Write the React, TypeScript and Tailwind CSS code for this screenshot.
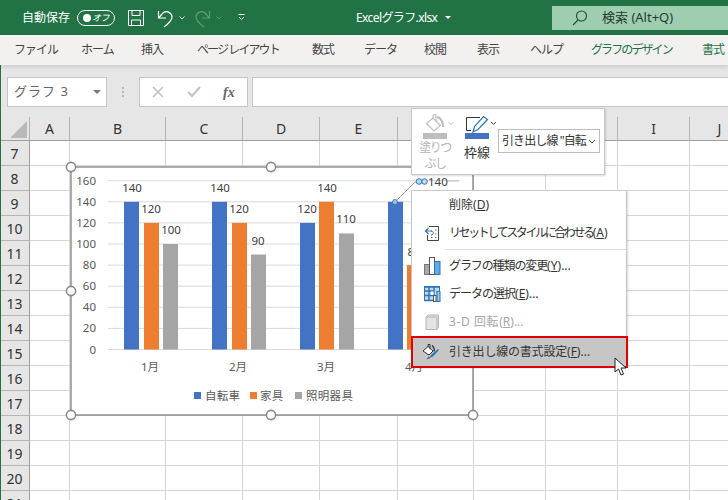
import React from "react";

const CJK = '"Noto Sans","Noto Sans CJK JP",sans-serif';

const tabs = [
  { label: "ファイル", w: "w-[38px]", ml: "ml-[14px]" },
  { label: "ホーム", w: "w-[32px]", ml: "ml-[29px]" },
  { label: "挿入", w: "w-[26px]", ml: "ml-[28px]" },
  { label: "ページ レイアウト", w: "w-[85px]", ml: "ml-[30px]" },
  { label: "数式", w: "w-[26px]", ml: "ml-[30px]" },
  { label: "データ", w: "w-[32px]", ml: "ml-[26px]" },
  { label: "校閲", w: "w-[26px]", ml: "ml-[28px]" },
  { label: "表示", w: "w-[26px]", ml: "ml-[27px]" },
  { label: "ヘルプ", w: "w-[32px]", ml: "ml-[27px]" },
  { label: "グラフのデザイン", w: "w-[81px]", ml: "ml-[29px]", green: true },
  { label: "書式", w: "w-[26px]", ml: "ml-[30px]", green: true },
];

// F, G and H sit behind the floating toolbar, so their letters never show
const columns = [
  { id: "a", name: "A", cls: "w-[40px]" },
  { id: "b", name: "B", cls: "w-[96px]" },
  { id: "c", name: "C", cls: "w-[77px]" },
  { id: "d", name: "D", cls: "w-[77px]" },
  { id: "e", name: "E", cls: "w-[78px]" },
  { id: "f", name: "", cls: "w-[76px]" },
  { id: "g", name: "", cls: "w-[72px]" },
  { id: "h", name: "", cls: "w-[72px]" },
  { id: "i", name: "I", cls: "w-[72px]" },
  { id: "j", name: "J", cls: "w-[60px]" },
];

const rows = [7, 8, 9, 10, 11, 12, 13, 14, 15, 16, 17, 18, 19, 20, 21];

function Sheet() {
  return (
    <div className="flex-1 overflow-hidden bg-white">
      <div className="flex h-[24px] bg-[#e6e6e6] border-b border-[#9f9f9f]">
        <div className="relative w-[30px] shrink-0 border-r border-[#b5b5b5]">
          <div className="absolute right-[2px] bottom-[2px] w-0 h-0 border-l-[17px] border-l-transparent border-b-[17px] border-b-[#b9b9b9]" />
        </div>
        {columns.map((c) => (
          <div
            key={c.id}
            className={`${c.cls} shrink-0 flex items-center justify-center border-r border-[#b5b5b5] text-[14px] text-[#333]`}
          >
            {c.name}
          </div>
        ))}
      </div>
      {rows.map((r) => (
        <div key={r} className="flex h-[25px]">
          <div className="w-[30px] shrink-0 flex items-center justify-center bg-[#e6e6e6] border-r border-b border-[#b5b5b5] border-r-[#9f9f9f] text-[14px] text-[#333]">
            {r}
          </div>
          {columns.map((c) => (
            <div key={c.id} className={`${c.cls} shrink-0 border-r border-b border-[#d6d6d6]`} />
          ))}
        </div>
      ))}
    </div>
  );
}

const bars = [
  { x: 124, w: 15, v: 140, c: "#4472c4", lx: 132, ly: 192 },
  { x: 144, w: 15, v: 120, c: "#ed7d31", lx: 151, ly: 213 },
  { x: 163, w: 15, v: 100, c: "#a5a5a5", lx: 171, ly: 234 },
  { x: 212, w: 15, v: 140, c: "#4472c4", lx: 220, ly: 192 },
  { x: 232, w: 15, v: 120, c: "#ed7d31", lx: 239, ly: 213 },
  { x: 251, w: 15, v: 90, c: "#a5a5a5", lx: 258, ly: 245 },
  { x: 300, w: 15, v: 120, c: "#4472c4", lx: 307, ly: 213 },
  { x: 319, w: 15, v: 140, c: "#ed7d31", lx: 327, ly: 192 },
  { x: 339, w: 15, v: 110, c: "#a5a5a5", lx: 346, ly: 223 },
  { x: 388, w: 15, v: 140, c: "#4472c4", lx: 0, ly: 0 },
  { x: 407, w: 15, v: 80, c: "#ed7d31", lx: 414, ly: 256 },
];

const axis = [160, 140, 120, 100, 80, 60, 40, 20, 0];
const axisY = (v: number) => 349.5 - (v / 20) * 21.1;

const handles = [
  [71, 167],
  [271, 167],
  [473, 167],
  [71, 291],
  [71, 415],
  [271, 415],
  [473, 415],
];

function Chart() {
  return (
    <svg
      className="absolute left-0 top-0 w-[728px] h-[500px]"
      viewBox="0 0 728 500"
      style={{ fontFamily: CJK }}
    >
      <rect x="71" y="167" width="402" height="248" fill="#fff" stroke="#8f8f8f" strokeWidth="1.5" />
      {axis.map((v) => (
        <g key={v}>
          <line x1="108" x2="460" y1={axisY(v)} y2={axisY(v)} stroke="#d9d9d9" strokeWidth="1" />
          <text x="96" y={axisY(v) + 4} textAnchor="end" fontSize="11.5" fill="#595959">
            {v}
          </text>
        </g>
      ))}
      {bars.map((b) => (
        <g key={b.x}>
          <rect x={b.x} y={axisY(b.v)} width={b.w} height={349.5 - axisY(b.v)} fill={b.c} />
          {b.lx > 0 && (
            <text x={b.lx} y={b.ly} textAnchor="middle" fontSize="11.5" fill="#404040">
              {b.v}
            </text>
          )}
        </g>
      ))}
      {["1月", "2月", "3月", "4月"].map((m, i) => (
        <text key={m} x={150 + i * 88} y={371} textAnchor="middle" fontSize="11.5" fill="#595959">
          {m}
        </text>
      ))}
      <rect x="194" y="392" width="7" height="7" fill="#4472c4" />
      <text x="205" y="400" fontSize="11.5" letterSpacing="0.3" fill="#595959">自転車</text>
      <rect x="250" y="392" width="7" height="7" fill="#ed7d31" />
      <text x="260" y="400" fontSize="11.5" letterSpacing="0.3" fill="#595959">家具</text>
      <rect x="295" y="392" width="7" height="7" fill="#a5a5a5" />
      <text x="306" y="400" fontSize="11.5" letterSpacing="0.3" fill="#595959">照明器具</text>

      <path d="M395 202 L415 182 L418 182" fill="none" stroke="#a6a6a6" strokeWidth="1" />
      <line x1="447" x2="459" y1="181" y2="181" stroke="#bfbfbf" />
      <circle cx="395" cy="202" r="2.5" fill="#9dc3e6" stroke="#2e75b6" strokeWidth="0.8" />
      <circle cx="419" cy="181.5" r="2.8" fill="#bcd7ef" stroke="#2e75b6" strokeWidth="1" />
      <circle cx="424.5" cy="181.5" r="2.8" fill="#bcd7ef" stroke="#2e75b6" strokeWidth="1" />
      <text x="428" y="185.5" fontSize="11.5" fill="#404040">140</text>

      {handles.map(([x, y]) => (
        <circle key={`${x}-${y}`} cx={x} cy={y} r="4.6" fill="#fff" stroke="#8a8a8a" strokeWidth="1.6" />
      ))}
    </svg>
  );
}

function MiniToolbar() {
  return (
    <div className="absolute left-[411px] top-[108px] w-[194px] h-[67px] bg-white border border-[#c8c8c8] shadow-[1px_1px_2px_rgba(0,0,0,0.15)] flex">
      <div className="relative w-[24px] ml-[11px] flex flex-col items-center pt-[24px]">
        <svg width="34" height="18" viewBox="0 0 34 18" fill="none" stroke="#bdbdbd" className="absolute left-[0px] top-[5px]">
          <path d="M3.5 9.5 L10 4 L17.5 11.5 L11 17 Z" fill="#fff" strokeWidth="1.1" />
          <path d="M10 5 V2 a1.5 1.5 0 0 1 3 0 V8" strokeWidth="1.1" />
          <path d="M14 3 C18 4 20 7 20 13" strokeWidth="2" />
          <path d="M25.5 8 L28 10.5 L30.5 8" strokeWidth="1" />
        </svg>
        <div className="w-[24px] h-[6px] bg-[#bdbdbd] shrink-0" />
        <div className="mt-[1px] w-[40px] text-[12px] leading-[16px] text-[#b5b5b5] text-center tracking-[-1.6px] whitespace-nowrap">
          塗りつ<br />ぶし
        </div>
      </div>
      <div className="relative w-[24px] ml-[18px] flex flex-col items-center pt-[24px]">
        <svg width="32" height="19" viewBox="0 0 32 19" fill="none" className="absolute left-[0px] top-[5px]">
          <path d="M1.5 16.5 V3.5 H15" stroke="#333" strokeWidth="1" />
          <path d="M1.5 16.5 H6" stroke="#333" strokeWidth="1" />
          <path d="M8 18 L9.5 12.5 L18.5 2.5 L22.5 5.5 L13 15.5 Z" fill="#fff" stroke="#2e75b6" strokeWidth="1.2" />
          <path d="M26 8 L28.5 10.5 L31 8" stroke="#444" strokeWidth="1" />
        </svg>
        <div className="w-[24px] h-[6px] bg-[#4472c4] shrink-0" />
        <div className="mt-[5px] text-[13px] leading-[16px] text-[#333] whitespace-nowrap">枠線</div>
      </div>
      <div className="absolute left-[86px] top-[20px] w-[102px] h-[24px] border border-[#bdbdbd] bg-white flex items-center justify-between pl-[3px] pr-[3px] text-[12px] text-[#333] whitespace-nowrap">
        <span className="tracking-[-0.9px]">引き出し線 "自転</span>
        <svg width="8" height="5" viewBox="0 0 8 5" fill="none" stroke="#444" className="shrink-0">
          <path d="M1 1 l3 3 l3 -3" />
        </svg>
      </div>
    </div>
  );
}

function ResetIcon() {
  return (
    <svg width="16" height="18" viewBox="0 0 16 18" fill="none">
      <path d="M5 2.5 H14.5 V16.5 H3.5 V11" stroke="#444" />
      <path d="M8 7 H2 M4.5 4 L1.5 7 L4.5 10" stroke="#2e75b6" strokeWidth="1.2" />
      <path d="M7 7 C10 7 10 11 7 11" stroke="#2e75b6" />
      <path d="M11 6 h1.5 M11 10 h1.5 M7 13.5 h1.5 M11 13.5 h1.5" stroke="#777" />
    </svg>
  );
}

function ChartTypeIcon() {
  return (
    <svg width="17" height="18" viewBox="0 0 17 18" fill="none">
      <rect x="0.5" y="7.5" width="5" height="10" fill="#a6a6a6" stroke="#777" />
      <rect x="5.5" y="0.5" width="5" height="17" fill="#fff" stroke="#555" />
      <rect x="10.5" y="4.5" width="5.5" height="13" fill="#63a9e6" stroke="#2e75b6" />
    </svg>
  );
}

function DataIcon() {
  return (
    <svg width="17" height="16" viewBox="0 0 17 16" fill="none">
      <rect x="0.5" y="0.5" width="15" height="14" fill="#bcd7ef" stroke="#2e75b6" />
      <path d="M0.5 1 H15.5 M0.5 5 H10 M0.5 9.5 H10 M0.5 14.5 H9 M5 0.5 V14.5 M10 0.5 V9" stroke="#2e75b6" strokeWidth="1.4" />
      <rect x="7" y="5.5" width="2.5" height="3.5" fill="#fff" />
      <rect x="9.5" y="9.5" width="2.5" height="6" fill="#fff" stroke="#555" />
      <rect x="13" y="5.5" width="3" height="10" fill="#9dc3e6" stroke="#2e75b6" />
    </svg>
  );
}

function RotateIcon() {
  return (
    <svg width="15" height="17" viewBox="0 0 15 17" fill="none">
      <path d="M1 3 L3 1 H13.5 V13 L12 15.5 H1 Z" fill="#e3e3e3" stroke="#b5b5b5" />
      <path d="M1 3 H12 V15.5" stroke="#b5b5b5" />
    </svg>
  );
}

function FormatIcon() {
  return (
    <svg width="18" height="16" viewBox="0 0 18 16" fill="none">
      <path d="M1 7 L6 2.5 L11 7 L7 11 Z" fill="#fff" stroke="#333" />
      <path d="M6 3 V0.5 H8 V5" stroke="#333" />
      <path d="M10 1.5 C12 3 12.5 5 12 7.5" stroke="#333" strokeWidth="1.4" />
      <path d="M7 14 L9.5 10.5 L16 5 L17 6 L11 12.5 Z" fill="#2e75b6" />
      <path d="M4 15.5 L7 12.5 L8.5 14 Z" fill="#555" />
    </svg>
  );
}

function MenuItem({
  icon,
  label,
  u,
  suffix,
  track,
  disabled,
}: {
  icon?: React.ReactNode;
  label: string;
  u: string;
  suffix: string;
  track: string;
  disabled?: boolean;
}) {
  return (
    <div className={`h-[28px] flex items-center ${disabled ? "text-[#a6a6a6]" : "text-[#333]"}`}>
      <div className="w-[37px] shrink-0 flex justify-center pl-[3px]">{icon}</div>
      <div className="text-[12px] whitespace-nowrap">
        <span className={track}>{label}</span>(<span className="underline">{u}</span>){suffix}
      </div>
    </div>
  );
}

function ContextMenu() {
  return (
    <div className="absolute left-[411px] top-[190px] w-[216px] h-[177px] bg-white border border-[#c8c8c8] shadow-[1px_1px_2px_rgba(0,0,0,0.15)]">
      <MenuItem label="削除" u="D" suffix="" track="tracking-[0px]" />
      <MenuItem icon={<ResetIcon />} label="リセットしてスタイルに合わせる" u="A" suffix="" track="tracking-[-2.4px]" />
      <div className="h-[1px] ml-[33px] my-[2px] bg-[#dcdcdc]" />
      <MenuItem icon={<ChartTypeIcon />} label="グラフの種類の変更" u="Y" suffix="..." track="tracking-[-1.1px]" />
      <MenuItem icon={<DataIcon />} label="データの選択" u="E" suffix="..." track="tracking-[-1px]" />
      <MenuItem icon={<RotateIcon />} label="3-D 回転" u="R" suffix="..." track="tracking-[0.6px]" disabled />
      <div className="absolute -left-[1px] top-[145px] w-[217px] h-[32px] bg-[#c6c6c6] border-2 border-[#e00000] flex items-center text-[#333]">
        <div className="w-[36px] shrink-0 flex justify-center">
          <FormatIcon />
        </div>
        <div className="text-[12px] whitespace-nowrap">
          <span className="tracking-[-0.2px]">引き出し線の書式設定</span>(<span className="underline">F</span>)...
        </div>
      </div>
    </div>
  );
}

export default function App() {
  return (
    <div
      className="relative w-[728px] h-[500px] overflow-hidden flex flex-col bg-white"
      style={{ fontFamily: CJK }}
    >
      {/* title bar */}
      <div className="h-[35px] shrink-0 bg-[#217346] flex items-center text-white text-[12px]">
        <span className="ml-[22px] w-[48px] whitespace-nowrap">自動保存</span>
        <div className="ml-[7px] w-[38px] h-[16px] rounded-full border border-white flex items-center justify-between pl-[5px] pr-[5px]">
          <div className="w-[8px] h-[8px] rounded-full bg-white" />
          <span className="text-[9px] italic tracking-[-0.5px]">オフ</span>
        </div>
        <svg width="16" height="16" viewBox="0 0 16 16" fill="none" stroke="#fff" className="ml-[13px]">
          <path d="M0.5 0.5 H15.5 V15.5 H0.5 Z M4 0.5 V5.5 H12 V0.5 M3.5 15.5 V10 H12.5 V15.5" />
        </svg>
        <svg width="16" height="20" viewBox="0 0 16 20" fill="none" stroke="#fff" strokeWidth="1.2" className="ml-[13px]">
          <path d="M1.5 3 V10 H9 M1.5 10 L6 5 C10 2 15 5 15 9 C15 13 11 16 7 19" />
        </svg>
        <svg width="6" height="4" viewBox="0 0 6 4" fill="none" stroke="#fff" className="ml-[6px]">
          <path d="M0.5 0.5 L3 3 L5.5 0.5" />
        </svg>
        <svg width="16" height="20" viewBox="0 0 16 20" fill="none" stroke="#5f9c7b" strokeWidth="1.2" className="ml-[10px]">
          <path d="M14.5 3 V10 H7 M14.5 10 L10 5 C6 2 1 5 1 9 C1 13 5 16 9 19" />
        </svg>
        <svg width="6" height="4" viewBox="0 0 6 4" fill="none" stroke="#5f9c7b" className="ml-[5px]">
          <path d="M0.5 0.5 L3 3 L5.5 0.5" />
        </svg>
        <svg width="7" height="7" viewBox="0 0 7 7" fill="none" stroke="#fff" className="ml-[16px]">
          <path d="M0.5 0.5 H6.5 M1 3 L3.5 5.5 L6 3" />
        </svg>
        <span className="ml-[111px] w-[83px] whitespace-nowrap tracking-[-0.6px]">Excelグラフ.xlsx</span>
        <div className="ml-[6px] w-0 h-0 border-x-[3px] border-x-transparent border-t-[3px] border-t-white" />
        <div className="ml-[101px] flex-1 h-[24px] bg-[#9fcdb0] flex items-center text-[#1f3d2d]">
          <svg width="16" height="16" viewBox="0 0 16 16" fill="none" stroke="#1f4d33" strokeWidth="1.1" className="ml-[20px]">
            <circle cx="9.5" cy="6" r="5" />
            <path d="M6 10 L1 15" />
          </svg>
          <span className="ml-[14px] text-[13px] whitespace-nowrap">検索 (Alt+Q)</span>
        </div>
      </div>

      {/* ribbon tabs */}
      <div className="h-[30px] shrink-0 bg-[#f3f1f0] flex items-center text-[12px] text-[#444] whitespace-nowrap overflow-hidden shadow-[0_2px_4px_rgba(0,0,0,0.12)] z-10">
        {tabs.map((t) => (
          <span
            key={t.label}
            className={`${t.w} ${t.ml} shrink-0 ${t.green ? "text-[#217346]" : ""} ${t.label.length > 5 ? "tracking-[-1.9px]" : "tracking-[-1px]"}`}
          >
            {t.label}
          </span>
        ))}
      </div>

      {/* formula bar */}
      <div className="h-[52px] shrink-0 bg-[#e6e6e6] flex items-start pt-[12px]">
        <div className="ml-[7px] w-[100px] h-[30px] bg-white border border-[#c6c6c6] flex items-center justify-between pl-[6px] pr-[5px] text-[13px] text-[#666]">
          <span className="tracking-[1px]">グラフ 3</span>
          <div className="w-0 h-0 border-x-[4px] border-x-transparent border-t-[4px] border-t-[#777]" />
        </div>
        <div className="ml-[15px] mt-[10px] flex flex-col gap-[2px]">
          <div className="w-[2px] h-[2px] bg-[#b5b5b5]" />
          <div className="w-[2px] h-[2px] bg-[#b5b5b5]" />
          <div className="w-[2px] h-[2px] bg-[#b5b5b5]" />
        </div>
        <div className="ml-[15px] w-[109px] h-[30px] bg-white border border-[#c6c6c6] flex items-center">
          <svg width="12" height="12" viewBox="0 0 12 12" fill="none" stroke="#c2c2c2" strokeWidth="1.6" className="ml-[12px]">
            <path d="M1 1 L11 11 M11 1 L1 11" />
          </svg>
          <svg width="14" height="12" viewBox="0 0 14 12" fill="none" stroke="#c2c2c2" strokeWidth="2" className="ml-[23px]">
            <path d="M1 6 L5 10 L13 1" />
          </svg>
          <span className="ml-[22px] text-[14px] font-bold italic text-[#666]" style={{ fontFamily: '"Liberation Serif",serif' }}>
            fx
          </span>
        </div>
        <div className="ml-[4px] flex-1 h-[30px] bg-white border-y border-l border-[#c6c6c6]" />
      </div>

      <Sheet />

      <Chart />
      <MiniToolbar />
      <ContextMenu />

      {/* green window edge */}
      <div className="absolute left-0 top-0 w-[1px] h-full bg-[#217346]" />

      {/* mouse pointer */}
      <svg width="13" height="20" viewBox="0 0 13 20" className="absolute left-[614px] top-[357px]">
        <path d="M1 1 V15 L4.5 12 L7 18 L9.5 17 L7 11 H12 Z" fill="#fff" stroke="#222" strokeWidth="1" />
      </svg>
    </div>
  );
}
